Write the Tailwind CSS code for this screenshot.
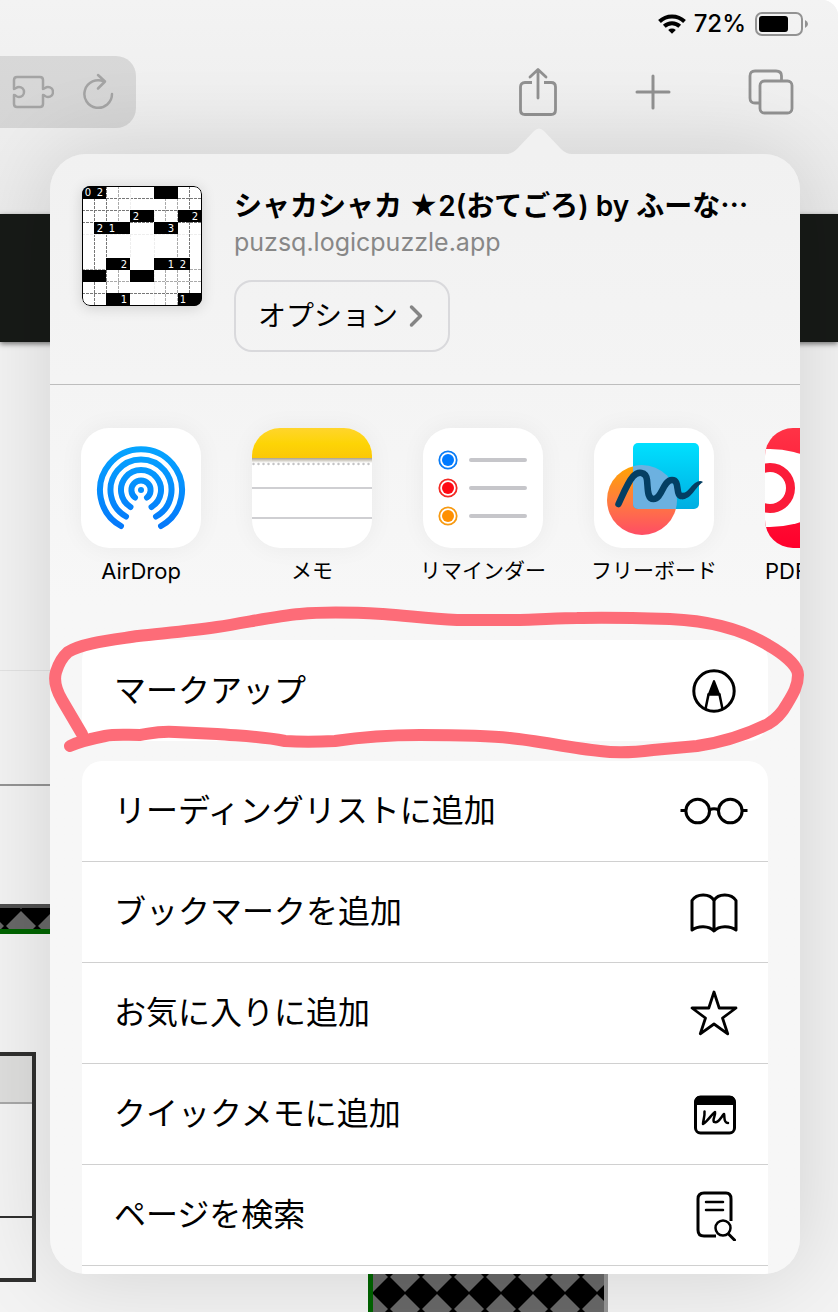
<!DOCTYPE html>
<html lang="ja">
<head>
  <meta charset="UTF-8" />
  <meta name="viewport" content="width=device-width, initial-scale=1.0" />
  <title>シャカシャカ ★2(おてごろ)</title>
  <script src="https://cdn.jsdelivr.net/npm/@tailwindcss/browser@4"></script>
</head>
<body class="bg-white font-['Inter','Noto_Sans_CJK_JP',sans-serif] text-black">
  <div class="relative min-h-screen overflow-hidden rounded-tr-[16px] bg-[#f3f3f3]">

    <!-- Browser chrome -->
    <header class="h-[214px] bg-linear-to-b from-[#f3f3f3] to-[#ebebeb]">
      <div class="flex h-[56px] items-start justify-end gap-2 pt-2 pr-[30px]">
        <svg class="mt-1 h-6 w-7" viewBox="0 0 28 24" fill="none" stroke="#000" stroke-width="4">
          <path d="M1.5 9.5a18 18 0 0 1 25 0" />
          <path d="M6.3 14.2a11.2 11.2 0 0 1 15.4 0" />
          <path d="M14 21.8l-3.8-3.8a5.6 5.6 0 0 1 7.6 0z" fill="#000" stroke="none" />
        </svg>
        <span class="text-[24px] leading-8 font-medium">72%</span>
        <svg class="mt-1 h-6 w-[54px]" viewBox="0 0 54 24" fill="none">
          <rect x="2" y="1" width="46" height="22" rx="6" stroke="#929292" stroke-width="2" />
          <rect x="5" y="4" width="29" height="16" rx="3" fill="#000" />
          <path d="M51 8v8q3-1.500 3-4t-3-4z" fill="#929292" />
        </svg>
      </div>
      <div class="flex h-[72px] items-center justify-between pr-11 text-[#919191]">
        <div class="flex h-full w-[136px] items-center gap-7 rounded-r-[20px] bg-black/10 pl-3 text-[#a4a4a4]">
          <button type="button" aria-label="拡張機能">
            <svg class="h-9 w-[42px]" viewBox="0 0 42 36" fill="none" stroke="currentColor" stroke-width="2.500" stroke-linejoin="round">
              <path d="M5 3h23q3 0 3 3v9c2 0 2-2 5-2a5 5 0 0 1 0 10c-3 0-3-2-5-2v9q0 3-3 3H5q-3 0-3-3v-9c2 0 2 2 5 2a5 5 0 0 0 0-10c-3 0-3 2-5 2V6q0-3 3-3z" />
            </svg>
          </button>
          <button type="button" aria-label="再読み込み">
            <svg class="h-10 w-8" viewBox="-1 0 32 40" fill="none" stroke="currentColor" stroke-width="2.500" stroke-linecap="round" stroke-linejoin="round">
              <path d="M29 22A13.800 13.800 0 1 1 21 9.500" />
              <path d="M15 3l7 6.500-7 7" />
            </svg>
          </button>
        </div>
        <div class="flex items-center gap-[77px]">
          <button type="button" aria-label="共有">
            <svg class="h-[50px] w-10" viewBox="0 1 40 50" fill="none" stroke="currentColor" stroke-width="2.800" stroke-linecap="round" stroke-linejoin="round">
              <path d="M14 16.500H7q-4.500 0-4.500 4.500v23q0 4.500 4.500 4.500h26q4.500 0 4.500-4.500V21q0-4.500-4.500-4.500h-7" stroke-linecap="butt" />
              <path d="M20 32V4M12 11l8-7.500 8 7.500" />
            </svg>
          </button>
          <button type="button" aria-label="新規タブ">
            <svg class="h-9 w-9" viewBox="0 0 36 36" fill="none" stroke="currentColor" stroke-width="3" stroke-linecap="round">
              <path d="M18 2v32M2 18h32" />
            </svg>
          </button>
          <button type="button" aria-label="タブ一覧">
            <svg class="h-[46px] w-[46px]" viewBox="0 0 46 46" fill="none" stroke="currentColor" stroke-width="2.800">
              <rect x="12" y="12" width="32" height="32" rx="4.500" />
              <path d="M12 34H7q-5 0-5-5V7q0-5 5-5h21q5.500 0 5.500 5v5" />
            </svg>
          </button>
        </div>
      </div>
    </header>

    <!-- Puzzle page behind the share sheet -->
    <main>
      <div class="relative h-32 bg-[#171a17] shadow-[0_2px_5px_rgba(0,0,0,0.5)]"></div>
      <div class="h-[329px] w-[200px] border-b border-[#e3e3e3]"></div>
      <div class="h-[115px] w-[200px] border-b-2 border-[#949494]"></div>
      <div class="mt-[118px] h-[30px] w-[200px] border-t-4 border-b-5 border-t-[#505050] border-b-[#006400]">
        <svg class="h-full w-full" aria-hidden="true">
          <pattern id="stripTile" width="32" height="32" patternUnits="userSpaceOnUse" patternTransform="translate(-11 -14)">
            <rect width="32" height="32" fill="#686868" />
            <path d="M16-1l17 17-17 17L-1 16z" fill="#000" />
          </pattern>
          <rect width="100%" height="100%" fill="url(#stripTile)" />
        </svg>
      </div>
      <div class="flex h-[260px] items-start gap-[332px] pt-[118px]">
        <div class="h-[230px] w-9 shrink-0 border-4 border-l-0 border-[#30302f]">
          <div class="h-12 border-b-2 border-[#a8a8a8] bg-[#dededd]"></div>
          <div class="h-[114px] border-b-2 border-[#30302f]"></div>
        </div>
        <div class="mt-[193px] h-[67px] w-60 shrink-0 border-r-4 border-l-5 border-r-[#969696] border-l-[#006400]">
          <svg class="h-full w-full" aria-hidden="true">
            <pattern id="boardTile" width="32" height="32" patternUnits="userSpaceOnUse">
              <rect width="32" height="32" fill="#686868" />
              <path d="M16-1l17 17-17 17L-1 16z" fill="#000" />
            </pattern>
            <rect width="100%" height="100%" fill="url(#boardTile)" />
          </svg>
        </div>
      </div>
    </main>

    <!-- Share sheet -->
    <div class="absolute top-[154px] right-[38px] bottom-[38px] left-[50px] rounded-[36px] shadow-[0_0_90px_rgba(0,0,0,0.14)]">
      <svg class="absolute -top-[26px] right-[228px] h-[27px] w-[66px]" viewBox="0 0 66 27" fill="#f1f1f1">
        <path d="M0 27v-1q6 0 11-5L28 3q5-5 10 0l17 18q5 5 11 5v1z" />
      </svg>
      <div class="h-full overflow-hidden rounded-[36px] bg-linear-to-b from-[#f1f1f1] to-[#f7f7f7] to-40%">

        <section class="flex gap-8 border-b border-[#bdbdbd] p-8">
          <svg class="h-[120px] w-[120px] shrink-0 rounded-lg bg-white shadow-[0_2px_14px_rgba(0,0,0,0.15)]" viewBox="0 0 120 120">
            <g fill="none" stroke="#777" stroke-dasharray="3 1">
              <path d="M0 12.500h120M0 24.500h120M0 36.500h120M0 107.500h120" />
              <path d="M12.500 12v108M24.500 0v120M107.500 0v120" />
              <path d="M0 83.500h24M48 95.500h72M0 95.500h48M96 83.500h24M36.500 0v48M36.500 72v48M83.500 0v48M83.500 84v36M95.500 12v108" stroke="#aaa" />
              <path d="M0 48.500h120M48.500 0v24M72.500 24v96M48.500 48v24" stroke="#eee" />
            </g>
            <path d="M0 0h24v13H0zM72 0h24v13H72zM48 24h24v12H48zM96 24h24v12H96zM12 36h36v12H12zM72 36h24v12H72zM24 72h24v12H24zM72 72h36v12H72zM0 84h24v12H0zM48 84h24v12H48zM24 107h24v13H24zM96 107h24v13H96z" />
            <rect x=".5" y=".5" width="119" height="119" rx="7.500" fill="none" stroke="#000" />
            <g class="font-['DejaVu_Sans',sans-serif] text-[10px]" fill="#fff" text-anchor="middle">
              <text x="6" y="10">0</text><text x="18" y="10">2</text>
              <text x="54" y="34">2</text><text x="113" y="34">2</text>
              <text x="18" y="46">2</text><text x="30" y="46">1</text><text x="89" y="46">3</text>
              <text x="42" y="82">2</text><text x="89" y="82">1</text><text x="101" y="82">2</text>
              <text x="42" y="117">1</text><text x="101" y="117">1</text>
            </g>
          </svg>
          <div class="min-w-0">
            <h1 class="overflow-hidden text-[28px] leading-9 font-semibold whitespace-nowrap">シャカシャカ ★2(おてごろ) by ふーな<span class="font-['Noto_Sans_CJK_JP',sans-serif]">…</span></h1>
            <p class="text-[25px] leading-9 text-[#878787]">puzsq.logicpuzzle.app</p>
            <button type="button" class="mt-5 flex h-[72px] w-[216px] items-center justify-between rounded-[18px] border-2 border-[#d9d9dc] pr-6 pl-[22px] text-[28px]">
              オプション
              <svg class="h-6 w-4" viewBox="0 0 16 24" fill="none" stroke="#858585" stroke-width="3.500" stroke-linecap="round" stroke-linejoin="round"><path d="M3.500 3l9 9-9 9" /></svg>
            </button>
          </div>
        </section>

        <nav class="flex gap-[51px] overflow-hidden pt-[43px] pb-[54px] pl-[31px]">
          <a href="#" class="flex w-[120px] shrink-0 flex-col items-center gap-2">
            <svg class="h-[120px] w-[120px] rounded-[28px] bg-white shadow-[0_0_24px_rgba(0,0,0,0.05)]" viewBox="0 0 120 120" fill="none" stroke="url(#airdropBlue)" stroke-width="6" stroke-linecap="round">
              <linearGradient id="airdropBlue" gradientUnits="userSpaceOnUse" x1="0" y1="18" x2="0" y2="100">
                <stop stop-color="#05a5ff" /><stop offset="1" stop-color="#0578fa" />
              </linearGradient>
              <path d="M40 98A41 41 0 1 1 80 98" />
              <path d="M45 88.500A30.500 30.500 0 1 1 75 88.500" />
              <path d="M49.500 79A20 20 0 1 1 70.500 79" />
              <path d="M54 69.500A9.600 9.600 0 1 1 66 69.500" />
              <circle cx="60" cy="62" r="3" fill="#058fff" stroke="none" />
            </svg>
            <span class="text-[22px] leading-[30px] whitespace-nowrap">AirDrop</span>
          </a>
          <a href="#" class="flex w-[120px] shrink-0 flex-col items-center gap-2">
            <svg class="h-[120px] w-[120px] rounded-[28px] bg-white shadow-[0_0_24px_rgba(0,0,0,0.05)]" viewBox="0 0 120 120">
              <linearGradient id="notesYellow" x2="0" y2="1">
                <stop stop-color="#ffd52c" /><stop offset=".5" stop-color="#fdd406" /><stop offset="1" stop-color="#fbc707" />
              </linearGradient>
              <linearGradient id="notesShade" x2="0" y2="1">
                <stop stop-color="#a9a18f" /><stop offset="1" stop-color="#fff" />
              </linearGradient>
              <rect width="120" height="31" fill="url(#notesYellow)" />
              <rect y="30" width="120" height="5" fill="url(#notesShade)" />
              <path d="M1.500 36H120" stroke="#c4c4c6" stroke-width="2.500" stroke-dasharray="0 5" stroke-linecap="round" />
              <path d="M0 60h120M0 90h120" stroke="#cfcfd2" stroke-width="2" />
            </svg>
            <span class="text-[21px] leading-[30px] whitespace-nowrap">メモ</span>
          </a>
          <a href="#" class="flex w-[120px] shrink-0 flex-col items-center gap-2">
            <svg class="h-[120px] w-[120px] rounded-[28px] bg-white shadow-[0_0_24px_rgba(0,0,0,0.05)]" viewBox="0 0 120 120" stroke-width="1.800">
              <g fill="none">
                <circle cx="25" cy="32" r="8.700" stroke="#0a7cf5" />
                <circle cx="25" cy="60" r="8.700" stroke="#f32a24" />
                <circle cx="25" cy="88" r="8.700" stroke="#f79a12" />
              </g>
              <circle cx="25" cy="32" r="6" fill="#007aff" />
              <circle cx="25" cy="60" r="6" fill="#ff0a14" />
              <circle cx="25" cy="88" r="6" fill="#ff9000" />
              <path d="M48 32h54M48 60h54M48 88h54" stroke="#c6c6ca" stroke-width="4" stroke-linecap="round" />
            </svg>
            <span class="text-[21px] leading-[30px] whitespace-nowrap">リマインダー</span>
          </a>
          <a href="#" class="flex w-[120px] shrink-0 flex-col items-center gap-2">
            <svg class="h-[120px] w-[120px] rounded-[28px] bg-white shadow-[0_0_24px_rgba(0,0,0,0.05)]" viewBox="0 0 120 120">
              <linearGradient id="boardOrange" x2="0" y2="1">
                <stop stop-color="#ffa500" /><stop offset=".5" stop-color="#ff7d3d" /><stop offset="1" stop-color="#ff4d65" />
              </linearGradient>
              <linearGradient id="boardCyan" x2="0" y2="1">
                <stop stop-color="#00e0ff" /><stop offset="1" stop-color="#00aee2" />
              </linearGradient>
              <clipPath id="boardSquare"><rect x="39" y="15" width="66" height="66" rx="5" /></clipPath>
              <circle cx="48" cy="72" r="35" fill="url(#boardOrange)" />
              <rect x="39" y="15" width="66" height="66" rx="5" fill="url(#boardCyan)" />
              <circle cx="48" cy="72" r="35" fill="#6cb1e0" clip-path="url(#boardSquare)" />
              <path d="M24.500 76C30 64 34 54 39 48.500C44 43 52 43.500 53 52C54 61 53 71 59.500 71C68 71 69 52 78 52C87 52 80 69 89 68" fill="none" stroke="#043f63" stroke-width="6.500" stroke-linecap="round" stroke-linejoin="round" />
              <path d="M88 71.200C98 71 101 59 109 54Q106 51.500 101 55C96 58.500 94 65 88 65z" fill="#043f63" />
            </svg>
            <span class="text-[21px] leading-[30px] whitespace-nowrap">フリーボード</span>
          </a>
          <a href="#" class="flex w-[120px] shrink-0 flex-col gap-2">
            <svg class="h-[120px] w-[120px] rounded-[28px]" viewBox="0 0 120 120">
              <linearGradient id="pdfRed" x2="0" y2="1">
                <stop stop-color="#ff3346" /><stop offset="1" stop-color="#ff002c" />
              </linearGradient>
              <rect width="120" height="120" fill="url(#pdfRed)" />
              <ellipse cx="5" cy="60" rx="62" ry="39" fill="#fff" />
              <circle cx="5" cy="60" r="20.500" fill="none" stroke="#fb1c39" stroke-width="9" />
            </svg>
            <span class="text-[22px] leading-[30px] whitespace-nowrap">PDF</span>
          </a>
        </nav>

        <section class="flex flex-col gap-5 px-8 text-[32px]">
          <button type="button" class="flex h-[101px] w-full items-center justify-between rounded-[20px] bg-white pr-5 pl-8 text-left">
            マークアップ
            <svg class="h-[46px] w-[68px]" viewBox="-34 -23 68 46" fill="none" stroke="#000" stroke-width="3">
              <circle r="20.200" />
              <path d="M-8.500 18l3-14.500h11l3 14.500" stroke-width="2.500" />
              <path d="M0-11q.8 0 1.200 1.200L6.500 4h-13l5.300-13.800Q-.8-11 0-11z" fill="#000" stroke="none" />
            </svg>
          </button>

          <div class="rounded-t-[20px] bg-white">
            <button type="button" class="flex h-[101px] w-full items-center justify-between border-b border-[#d0d0d0] pr-5 pl-8 text-left">
              リーディングリストに追加
              <svg class="h-[46px] w-[68px]" viewBox="-34 -23 68 46" fill="none" stroke="#000" stroke-width="3">
                <circle cx="-16.300" r="11.800" /><circle cx="16.300" r="11.800" />
                <path d="M-4.600-1q4.600-2.500 9.200 0M-33.500-.5h5.500M28-.5h5.500" />
              </svg>
            </button>
            <button type="button" class="flex h-[101px] w-full items-center justify-between border-b border-[#d0d0d0] pr-5 pl-8 text-left">
              ブックマークを追加
              <svg class="h-[46px] w-[68px]" viewBox="-34 -24 68 46" fill="none" stroke="#000" stroke-width="3" stroke-linejoin="round">
                <path d="M0 18V-12.500C-4-19.500-17-20-22-12.500V17C-16 12.500-5 12.500 0 18C5 12.500 16 12.500 22 17V-12.500C17-20 4-19.500 0-12.500" />
              </svg>
            </button>
            <button type="button" class="flex h-[101px] w-full items-center justify-between border-b border-[#d0d0d0] pr-5 pl-8 text-left">
              お気に入りに追加
              <svg class="h-[46px] w-[68px]" viewBox="-34 -23 68 46" fill="none" stroke="#000" stroke-width="2.800" stroke-linejoin="round">
                <path d="M0-21L5.200-5H22L8.500 5 13.700 20.800 0 11-13.700 20.800-8.500 5-22-5h16.800z" />
              </svg>
            </button>
            <button type="button" class="flex h-[101px] w-full items-center justify-between border-b border-[#d0d0d0] pr-5 pl-8 text-left">
              クイックメモに追加
              <svg class="h-[46px] w-[68px]" viewBox="-34 -23 68 46" fill="none" stroke="#000" stroke-width="3" stroke-linecap="round" stroke-linejoin="round">
                <rect x="-18.500" y="-17" width="39" height="36" rx="5" />
                <path d="M-19-9v-4q0-5 5-5h30q5 0 5 5v4z" fill="#000" stroke="none" />
                <path d="M-9.500-2.500C-9 2-11 7-11 10C-6 7-3 1 1-2C2 2-2 5 0 8C4 10 7 3 10 0C11 3 9 9 14 9" stroke-width="2.500" />
              </svg>
            </button>
            <button type="button" class="flex h-[101px] w-full items-center justify-between border-b border-[#d0d0d0] pr-5 pl-8 text-left">
              ページを検索
              <svg class="h-[52px] w-[68px]" viewBox="-34 -27 68 52" fill="none" stroke="#000" stroke-width="3" stroke-linecap="round">
                <path d="M2 20h-12q-6 0-6-6v-31q0-6 6-6h22q5 0 5 6v22" stroke-linecap="butt" />
                <path d="M-8-14h17M-8-6h17" stroke-width="2.500" />
                <circle cx="9" cy="12" r="7.500" stroke-width="2.500" />
                <path d="M14.500 18l6 6" />
              </svg>
            </button>
            <div class="h-10"></div>
          </div>
        </section>
      </div>
    </div>

    <!-- Hand-drawn ring round the markup row -->
    <svg class="pointer-events-none absolute top-[600px] left-10 h-[170px] w-[780px]" viewBox="40 600 780 170" fill="none" stroke="#fd6c78" stroke-width="12" stroke-linecap="round" stroke-linejoin="round">
      <path d="M82 734L62 700C55 688 54 679 56 672Q60 659 68 652C82 643 112 640 138 636C165 633 190 631 217 627C245 623 275 616 300 614C330 611 365 613 383 614C410 616 430 619 457 620H510C530 620 560 618 577 618C605 617 640 618 670 619C715 621 745 631 768 645C782 653 798 665 798 675C798 686 793 694 787 704C782 713 775 720 768 724C750 733 725 742 697 746L653 750C630 753 615 753 600 751C570 748 540 741 510 738C485 735 450 735 420 735C380 735 355 738 335 741C315 742 300 742 285 741C260 736 240 736 217 734L175 732C155 731 150 734 140 735C125 735 115 734 105 736C90 739 78 742 70 746" />
    </svg>
  </div>
</body>
</html>
